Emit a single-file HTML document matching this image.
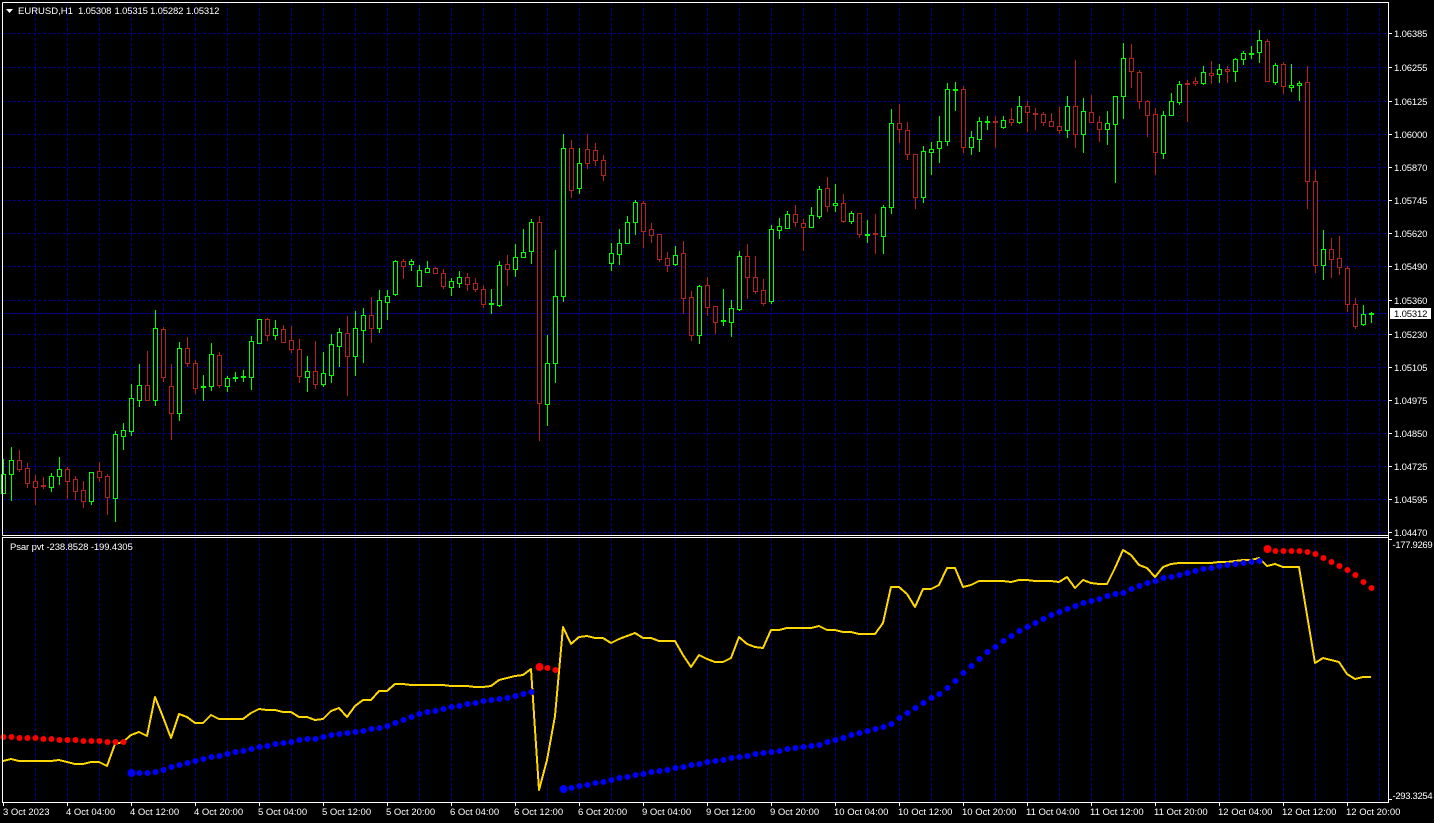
<!DOCTYPE html>
<html><head><meta charset="utf-8"><title>EURUSD,H1</title>
<style>
html,body{margin:0;padding:0;background:#000;width:1434px;height:823px;overflow:hidden}
svg{display:block}
text{font-family:"Liberation Sans",sans-serif;font-size:9.5px;fill:#fff}
.p{letter-spacing:-.15px}
.n{letter-spacing:-.33px}
.c{letter-spacing:-.11px}
</style></head><body>
<svg width="1434" height="823" viewBox="0 0 1434 823" xmlns="http://www.w3.org/2000/svg">
<rect width="1434" height="823" fill="#000"/>
<g shape-rendering="crispEdges" fill="none">
<path stroke="#00008c" stroke-dasharray="3 2" d="M3 33.5H1388M3 67.5H1388M3 101.5H1388M3 134.5H1388M3 167.5H1388M3 200.5H1388M3 233.5H1388M3 266.5H1388M3 300.5H1388M3 334.5H1388M3 367.5H1388M3 400.5H1388M3 433.5H1388M3 466.5H1388M3 499.5H1388M3 532.5H1388"/>
<path stroke="#000088" stroke-dasharray="3 2" d="M35.5 3V535M67.5 3V535M99.5 3V535M131.5 3V535M163.5 3V535M195.5 3V535M227.5 3V535M259.5 3V535M291.5 3V535M323.5 3V535M355.5 3V535M387.5 3V535M419.5 3V535M451.5 3V535M483.5 3V535M515.5 3V535M547.5 3V535M579.5 3V535M611.5 3V535M643.5 3V535M675.5 3V535M707.5 3V535M739.5 3V535M771.5 3V535M803.5 3V535M835.5 3V535M867.5 3V535M899.5 3V535M931.5 3V535M963.5 3V535M995.5 3V535M1027.5 3V535M1059.5 3V535M1091.5 3V535M1123.5 3V535M1155.5 3V535M1187.5 3V535M1219.5 3V535M1251.5 3V535M1283.5 3V535M1315.5 3V535M1347.5 3V535M1379.5 3V535"/>
<path stroke="#000088" stroke-dasharray="3 2" d="M35.5 538V802M67.5 538V802M99.5 538V802M131.5 538V802M163.5 538V802M195.5 538V802M227.5 538V802M259.5 538V802M291.5 538V802M323.5 538V802M355.5 538V802M387.5 538V802M419.5 538V802M451.5 538V802M483.5 538V802M515.5 538V802M547.5 538V802M579.5 538V802M611.5 538V802M643.5 538V802M675.5 538V802M707.5 538V802M739.5 538V802M771.5 538V802M803.5 538V802M835.5 538V802M867.5 538V802M899.5 538V802M931.5 538V802M963.5 538V802M995.5 538V802M1027.5 538V802M1059.5 538V802M1091.5 538V802M1123.5 538V802M1155.5 538V802M1187.5 538V802M1219.5 538V802M1251.5 538V802M1283.5 538V802M1315.5 538V802M1347.5 538V802M1379.5 538V802"/>
<path stroke="#000080" d="M3 313.5H1388"/>
<!-- green wicks -->
<path stroke="#00ff00" d="M3.5 459V494M11.5 447V501M51.5 473V492M59.5 457V485M91.5 472V505M115.5 431V522M123.5 423V450M131.5 384V436M139.5 364V407M155.5 310V406M179.5 342V421M203.5 375V401M211.5 343V391M227.5 376V392M235.5 372V382M243.5 370V382M251.5 336V390M259.5 319V344M275.5 320V340M307.5 356V392M323.5 352V387M331.5 334V383M339.5 328V367M355.5 311V376M363.5 308V363M379.5 290V333M387.5 290V320M395.5 260V296M411.5 259V271M419.5 265V287M427.5 261V273M451.5 278V296M459.5 271V288M491.5 289V314M499.5 261V307M515.5 244V277M523.5 229V258M531.5 219V264M547.5 335V426M555.5 250V383M563.5 134V302M579.5 148V194M611.5 243V271M619.5 229V265M627.5 216V244M635.5 200V235M675.5 246V266M699.5 285V344M723.5 289V326M731.5 300V337M739.5 251V311M771.5 225V304M779.5 218V239M787.5 211V229M811.5 207V228M819.5 186V219M835.5 184V212M851.5 211V224M867.5 220V243M883.5 205V254M891.5 109V214M923.5 146V203M931.5 142V175M939.5 116V163M947.5 83V146M955.5 82V111M971.5 131V155M979.5 117V152M987.5 116V130M1003.5 116V129M1019.5 96V124M1067.5 96V138M1083.5 98V153M1107.5 111V145M1115.5 96V183M1123.5 43V119M1163.5 111V159M1171.5 93V116M1179.5 81V105M1203.5 66V85M1219.5 64V83M1235.5 58V82M1243.5 51V65M1251.5 46V59M1259.5 30V63M1275.5 63V85M1291.5 64V92M1299.5 81V101M1323.5 230V280M1363.5 305V326M1371.5 312V323"/>
<path stroke="#00ff00" fill="#000" d="M1.5 474.5h4v19h-4zM9.5 460.5h4v14h-4zM49.5 476.5h4v11h-4zM57.5 469.5h4v7h-4zM89.5 472.5h4v29h-4zM113.5 434.5h4v64h-4zM121.5 430.5h4v6h-4zM129.5 398.5h4v33h-4zM137.5 385.5h4v15h-4zM153.5 328.5h4v72h-4zM177.5 348.5h4v65h-4zM201.5 386.5h4v1h-4zM209.5 354.5h4v32h-4zM225.5 378.5h4v8h-4zM233.5 377.5h4v1h-4zM241.5 376.5h4v1h-4zM249.5 341.5h4v36h-4zM257.5 319.5h4v24h-4zM273.5 328.5h4v7h-4zM305.5 371.5h4v6h-4zM321.5 373.5h4v11h-4zM329.5 344.5h4v31h-4zM337.5 332.5h4v14h-4zM353.5 328.5h4v28h-4zM361.5 315.5h4v15h-4zM377.5 300.5h4v28h-4zM385.5 296.5h4v6h-4zM393.5 261.5h4v33h-4zM409.5 261.5h4v3h-4zM417.5 270.5h4v16h-4zM425.5 268.5h4v4h-4zM449.5 281.5h4v6h-4zM457.5 277.5h4v6h-4zM489.5 303.5h4v1h-4zM497.5 265.5h4v40h-4zM513.5 257.5h4v12h-4zM521.5 252.5h4v5h-4zM529.5 222.5h4v29h-4zM545.5 363.5h4v41h-4zM553.5 296.5h4v67h-4zM561.5 148.5h4v148h-4zM577.5 163.5h4v25h-4zM609.5 253.5h4v10h-4zM617.5 243.5h4v11h-4zM625.5 222.5h4v21h-4zM633.5 202.5h4v20h-4zM673.5 255.5h4v9h-4zM697.5 286.5h4v49h-4zM721.5 320.5h4v1h-4zM729.5 308.5h4v14h-4zM737.5 256.5h4v53h-4zM769.5 229.5h4v72h-4zM777.5 226.5h4v4h-4zM785.5 214.5h4v14h-4zM809.5 215.5h4v12h-4zM817.5 189.5h4v27h-4zM833.5 203.5h4v2h-4zM849.5 213.5h4v8h-4zM865.5 234.5h4v1h-4zM881.5 207.5h4v29h-4zM889.5 123.5h4v84h-4zM921.5 151.5h4v46h-4zM929.5 149.5h4v3h-4zM937.5 141.5h4v7h-4zM945.5 89.5h4v52h-4zM953.5 89.5h4v1h-4zM969.5 137.5h4v10h-4zM977.5 121.5h4v18h-4zM985.5 121.5h4v1h-4zM1001.5 120.5h4v7h-4zM1017.5 106.5h4v16h-4zM1065.5 106.5h4v24h-4zM1081.5 111.5h4v23h-4zM1105.5 123.5h4v6h-4zM1113.5 96.5h4v28h-4zM1121.5 58.5h4v38h-4zM1161.5 115.5h4v38h-4zM1169.5 101.5h4v14h-4zM1177.5 84.5h4v18h-4zM1201.5 72.5h4v11h-4zM1217.5 69.5h4v5h-4zM1233.5 59.5h4v12h-4zM1241.5 53.5h4v6h-4zM1249.5 53.5h4v1h-4zM1257.5 40.5h4v12h-4zM1273.5 65.5h4v17h-4zM1289.5 85.5h4v2h-4zM1297.5 83.5h4v2h-4zM1321.5 249.5h4v16h-4zM1361.5 314.5h4v10h-4zM1369.5 313.5h4v1h-4z"/>
<!-- red wicks -->
<path stroke="#b22222" d="M19.5 450V472M27.5 463V488M35.5 475V505M43.5 477V489M67.5 467V499M75.5 476V500M83.5 481V508M99.5 462V482M107.5 474V515M147.5 351V401M163.5 327V382M171.5 364V440M187.5 337V367M195.5 360V394M219.5 352V388M267.5 318V341M283.5 325V343M291.5 326V353M299.5 339V383M315.5 341V389M347.5 316V396M371.5 297V343M403.5 259V279M435.5 267V274M443.5 269V289M467.5 273V291M475.5 278V292M483.5 285V308M507.5 255V286M539.5 216V441M571.5 140V198M587.5 134V169M595.5 143V166M603.5 155V181M643.5 201V248M651.5 223V243M659.5 234V262M667.5 252V272M683.5 241V314M691.5 291V341M707.5 277V316M715.5 306V334M747.5 244V299M755.5 256V294M763.5 279V306M795.5 205V227M803.5 219V251M827.5 177V212M843.5 194V223M859.5 213V238M875.5 214V254M899.5 104V143M907.5 122V160M915.5 154V209M963.5 86V153M995.5 116V148M1011.5 108V126M1027.5 101V132M1035.5 108V130M1043.5 112V126M1051.5 113V127M1059.5 107V134M1075.5 60V148M1091.5 95V123M1099.5 116V142M1131.5 44V88M1139.5 70V109M1147.5 100V137M1155.5 108V175M1187.5 80V122M1195.5 77V86M1211.5 61V84M1227.5 66V83M1267.5 39V82M1283.5 62V94M1307.5 66V209M1315.5 170V273M1331.5 238V278M1339.5 236V275M1347.5 266V312M1355.5 298V329"/>
<path stroke="#b22222" fill="#000" d="M17.5 460.5h4v9h-4zM25.5 468.5h4v15h-4zM33.5 481.5h4v6h-4zM41.5 485.5h4v1h-4zM65.5 469.5h4v12h-4zM73.5 479.5h4v12h-4zM81.5 490.5h4v11h-4zM97.5 471.5h4v6h-4zM105.5 476.5h4v21h-4zM145.5 385.5h4v15h-4zM161.5 329.5h4v48h-4zM169.5 386.5h4v27h-4zM185.5 348.5h4v15h-4zM193.5 363.5h4v25h-4zM217.5 355.5h4v30h-4zM265.5 319.5h4v16h-4zM281.5 329.5h4v13h-4zM289.5 340.5h4v9h-4zM297.5 349.5h4v27h-4zM313.5 371.5h4v13h-4zM345.5 333.5h4v23h-4zM369.5 315.5h4v13h-4zM401.5 261.5h4v5h-4zM433.5 268.5h4v5h-4zM441.5 273.5h4v13h-4zM465.5 277.5h4v7h-4zM473.5 283.5h4v6h-4zM481.5 289.5h4v15h-4zM505.5 264.5h4v5h-4zM537.5 222.5h4v181h-4zM569.5 148.5h4v42h-4zM585.5 149.5h4v14h-4zM593.5 150.5h4v10h-4zM601.5 160.5h4v15h-4zM641.5 203.5h4v28h-4zM649.5 229.5h4v6h-4zM657.5 234.5h4v25h-4zM665.5 258.5h4v7h-4zM681.5 253.5h4v45h-4zM689.5 297.5h4v38h-4zM705.5 285.5h4v22h-4zM713.5 306.5h4v16h-4zM745.5 256.5h4v21h-4zM753.5 277.5h4v14h-4zM761.5 290.5h4v13h-4zM793.5 214.5h4v8h-4zM801.5 223.5h4v4h-4zM825.5 188.5h4v18h-4zM841.5 203.5h4v18h-4zM857.5 213.5h4v21h-4zM873.5 233.5h4v1h-4zM897.5 123.5h4v6h-4zM905.5 130.5h4v24h-4zM913.5 154.5h4v43h-4zM961.5 89.5h4v58h-4zM993.5 121.5h4v1h-4zM1009.5 119.5h4v3h-4zM1025.5 106.5h4v6h-4zM1033.5 113.5h4v1h-4zM1041.5 114.5h4v8h-4zM1049.5 121.5h4v5h-4zM1057.5 126.5h4v4h-4zM1073.5 106.5h4v28h-4zM1089.5 112.5h4v10h-4zM1097.5 122.5h4v7h-4zM1129.5 58.5h4v13h-4zM1137.5 72.5h4v29h-4zM1145.5 101.5h4v14h-4zM1153.5 114.5h4v38h-4zM1185.5 83.5h4v1h-4zM1193.5 81.5h4v2h-4zM1209.5 73.5h4v2h-4zM1225.5 69.5h4v2h-4zM1265.5 41.5h4v40h-4zM1281.5 64.5h4v22h-4zM1305.5 82.5h4v99h-4zM1313.5 181.5h4v84h-4zM1329.5 249.5h4v10h-4zM1337.5 258.5h4v9h-4zM1345.5 268.5h4v36h-4zM1353.5 304.5h4v22h-4z"/>
</g>
<!-- indicator line -->
<polyline shape-rendering="crispEdges" fill="none" stroke="#ffd700" stroke-width="2" stroke-linejoin="round" points="3,761 11,759 19,761 27,761 35,761 43,761 51,761 59,760 67,762 75,764 83,764 91,762 99,762 107,766 115,744 123,742 131,735 139,732 147,736 155,697 163,717 171,738 179,714 187,717 195,723 203,723 211,715 219,719 227,719 235,719 243,719 251,713 259,709 267,710 275,710 283,712 291,712 299,717 307,717 315,720 323,719 331,711 339,708 347,717 355,706 363,700 371,700 379,691 387,691 395,684 403,684 411,685 419,685 427,685 435,685 443,685 451,686 459,686 467,686 475,687 483,687 491,686 499,680 507,678 515,676 523,675 531,669 539,790 547,760 555,716 563,627 571,644 579,637 587,636 595,638 603,638 611,643 619,639 627,636 635,633 643,638 651,638 659,641 667,641 675,641 683,655 691,667 699,655 707,659 715,662 723,662 731,658 739,637 747,644 755,647 763,648 771,630 779,630 787,628 795,628 803,628 811,628 819,626 827,630 835,630 843,632 851,632 859,634 867,634 875,634 883,623 891,587 899,587 907,594 915,607 923,589 931,589 939,585 947,568 955,568 963,587 971,585 979,581 987,581 995,581 1003,581 1011,582 1019,580 1027,580 1035,581 1043,581 1051,581 1059,582 1067,577 1075,588 1083,580 1091,583 1099,584 1107,584 1115,568 1123,550 1131,555 1139,565 1147,568 1155,577 1163,567 1171,564 1179,563 1187,563 1195,563 1203,563 1211,563 1219,562 1227,562 1235,561 1243,560 1251,560 1259,558 1267,566 1275,564 1283,567 1291,567 1299,567 1307,615 1315,663 1323,658 1331,660 1339,662 1347,674 1355,679 1363,677 1371,677"/>
<!-- psar dots -->
<g fill="none" stroke-linecap="round">
<path stroke="#ff0000" stroke-width="6" d="M3.5 737h0M11.5 737h0M19.5 738h0M27.5 738h0M35.5 738h0M43.5 739h0M51.5 739h0M59.5 740h0M67.5 740h0M75.5 740h0M83.5 741h0M91.5 741h0M99.5 741h0M107.5 742h0M115.5 742h0M123.5 742h0M547.5 668h0M555.5 670h0M1275.5 551h0M1283.5 551h0M1291.5 551h0M1299.5 551h0M1307.5 552h0M1315.5 554h0M1323.5 558h0M1331.5 562h0M1339.5 566h0M1347.5 570h0M1355.5 575h0M1363.5 582h0M1371.5 588h0"/>
<path stroke="#ff0000" stroke-width="8" d="M539.5 667h0M1267.5 549h0"/>
<path stroke="#0000ff" stroke-width="6" d="M139.5 773h0M147.5 773h0M155.5 772h0M163.5 770h0M171.5 767h0M179.5 765h0M187.5 763h0M195.5 761h0M203.5 759h0M211.5 757h0M219.5 756h0M227.5 754h0M235.5 752h0M243.5 751h0M251.5 749h0M259.5 747h0M267.5 746h0M275.5 744h0M283.5 743h0M291.5 742h0M299.5 740h0M307.5 739h0M315.5 739h0M323.5 737h0M331.5 735h0M339.5 734h0M347.5 733h0M355.5 732h0M363.5 731h0M371.5 729h0M379.5 728h0M387.5 726h0M395.5 723h0M403.5 720h0M411.5 717h0M419.5 714h0M427.5 712h0M435.5 711h0M443.5 709h0M451.5 707h0M459.5 706h0M467.5 704h0M475.5 703h0M483.5 701h0M491.5 700h0M499.5 699h0M507.5 698h0M515.5 696h0M523.5 694h0M531.5 692h0M571.5 788h0M579.5 786h0M587.5 785h0M595.5 783h0M603.5 782h0M611.5 780h0M619.5 778h0M627.5 777h0M635.5 775h0M643.5 774h0M651.5 772h0M659.5 771h0M667.5 770h0M675.5 768h0M683.5 767h0M691.5 765h0M699.5 764h0M707.5 762h0M715.5 761h0M723.5 760h0M731.5 758h0M739.5 757h0M747.5 756h0M755.5 754h0M763.5 753h0M771.5 752h0M779.5 751h0M787.5 749h0M795.5 748h0M803.5 747h0M811.5 746h0M819.5 745h0M827.5 742h0M835.5 740h0M843.5 738h0M851.5 735h0M859.5 733h0M867.5 731h0M875.5 729h0M883.5 727h0M891.5 724h0M899.5 718h0M907.5 713h0M915.5 708h0M923.5 703h0M931.5 698h0M939.5 694h0M947.5 688h0M955.5 681h0M963.5 673h0M971.5 666h0M979.5 659h0M987.5 652h0M995.5 647h0M1003.5 641h0M1011.5 636h0M1019.5 631h0M1027.5 627h0M1035.5 623h0M1043.5 619h0M1051.5 615h0M1059.5 612h0M1067.5 609h0M1075.5 606h0M1083.5 603h0M1091.5 601h0M1099.5 599h0M1107.5 596h0M1115.5 594h0M1123.5 593h0M1131.5 589h0M1139.5 586h0M1147.5 583h0M1155.5 581h0M1163.5 578h0M1171.5 577h0M1179.5 575h0M1187.5 573h0M1195.5 571h0M1203.5 569h0M1211.5 568h0M1219.5 566h0M1227.5 565h0M1235.5 564h0M1243.5 563h0M1251.5 562h0M1259.5 561h0"/>
<path stroke="#0000ff" stroke-width="8" d="M131.5 773h0M563.5 789h0"/>
</g>
<!-- frames and ticks -->
<g shape-rendering="crispEdges" fill="none" stroke="#fff">
<path d="M2.5 2.5H1388.5V802.5H2.5V537.5H1388.5M2.5 535.5H1388.5M2.5 2.5V535.5"/>
<path d="M1388 33.5h4M1388 67.5h4M1388 101.5h4M1388 134.5h4M1388 167.5h4M1388 200.5h4M1388 233.5h4M1388 266.5h4M1388 300.5h4M1388 334.5h4M1388 367.5h4M1388 400.5h4M1388 433.5h4M1388 466.5h4M1388 499.5h4M1388 532.5h4M1388 539.5h4M1388 799.5h4"/>
<path d="M3.5 802v4M67.5 802v4M131.5 802v4M195.5 802v4M259.5 802v4M323.5 802v4M387.5 802v4M451.5 802v4M515.5 802v4M579.5 802v4M643.5 802v4M707.5 802v4M771.5 802v4M835.5 802v4M899.5 802v4M963.5 802v4M1027.5 802v4M1091.5 802v4M1155.5 802v4M1219.5 802v4M1283.5 802v4M1347.5 802v4"/>
</g>
<polygon points="6,9 13,9 9.5,13" fill="#fff"/>
<text x="18" y="14">EURUSD,H1</text>
<text class="p" x="78" y="14">1.05308</text><text class="p" x="114.500" y="14">1.05315</text><text class="p" x="150" y="14">1.05282</text><text class="p" x="186" y="14">1.05312</text>
<text class="c" x="10" y="550">Psar pvt -238.8528 -199.4305</text>
<g class="p">
<text x="1394" y="37">1.06385</text><text x="1394" y="71">1.06255</text><text x="1394" y="105">1.06125</text><text x="1394" y="138">1.06000</text><text x="1394" y="171">1.05870</text><text x="1394" y="204">1.05745</text><text x="1394" y="237">1.05620</text><text x="1394" y="270">1.05490</text><text x="1394" y="304">1.05360</text><text x="1394" y="338">1.05230</text><text x="1394" y="371">1.05105</text><text x="1394" y="404">1.04975</text><text x="1394" y="437">1.04850</text><text x="1394" y="470">1.04725</text><text x="1394" y="503">1.04595</text><text x="1394" y="536">1.04470</text>
</g>
<text class="n" x="1392.500" y="548">-177.9269</text><text class="n" x="1392.500" y="799">-293.3254</text>
<rect x="1390" y="308" width="41" height="11" fill="#fff"/>
<text class="p" x="1394" y="317" style="fill:#000">1.05312</text>
<g>
<text x="3" y="815">3 Oct 2023</text><text x="66" y="815">4 Oct 04:00</text><text x="130" y="815">4 Oct 12:00</text><text x="194" y="815">4 Oct 20:00</text><text x="258" y="815">5 Oct 04:00</text><text x="322" y="815">5 Oct 12:00</text><text x="386" y="815">5 Oct 20:00</text><text x="450" y="815">6 Oct 04:00</text><text x="514" y="815">6 Oct 12:00</text><text x="578" y="815">6 Oct 20:00</text><text x="642" y="815">9 Oct 04:00</text><text x="706" y="815">9 Oct 12:00</text><text x="770" y="815">9 Oct 20:00</text><text x="834" y="815">10 Oct 04:00</text><text x="898" y="815">10 Oct 12:00</text><text x="962" y="815">10 Oct 20:00</text><text x="1026" y="815">11 Oct 04:00</text><text x="1090" y="815">11 Oct 12:00</text><text x="1154" y="815">11 Oct 20:00</text><text x="1218" y="815">12 Oct 04:00</text><text x="1282" y="815">12 Oct 12:00</text><text x="1346" y="815">12 Oct 20:00</text>
</g>
</svg>
</body></html>
